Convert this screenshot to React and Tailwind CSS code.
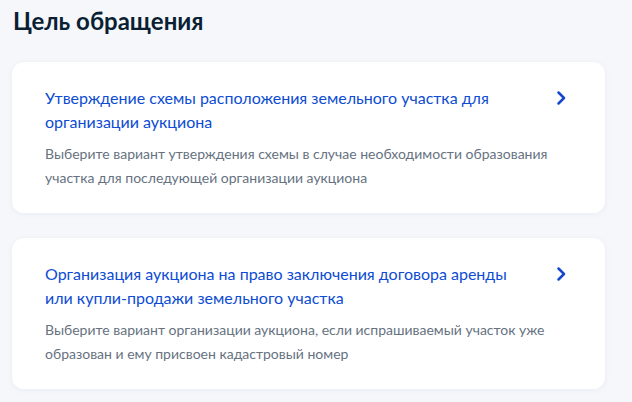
import React from 'react';

const items = [
  {
    title: 'Утверждение схемы расположения земельного участка для организации аукциона',
    text: 'Выберите вариант утверждения схемы в случае необходимости образования участка для последующей организации аукциона',
  },
  {
    title: 'Организация аукциона на право заключения договора аренды или купли-продажи земельного участка',
    text: 'Выберите вариант организации аукциона, если испрашиваемый участок уже образован и ему присвоен кадастровый номер',
  },
];

const Chevron = () => (
  <svg width="16" height="16" viewBox="0 0 16 16" fill="none">
    <path d="M5.5 2.5 L11 8 L5.5 13.5" stroke="#1447cc" strokeWidth="2.5" strokeLinecap="round" strokeLinejoin="round" />
  </svg>
);

const App = () => {
  return (
    <div className="min-h-screen w-[632px] h-[402px] overflow-hidden bg-[#f5f7fb] px-[12px] pt-[6px] font-['Lato','Noto_Sans',sans-serif]">
      <h1 className="pl-[1px] text-[24px] font-bold leading-[30px] text-[#0b1f33]">Цель обращения</h1>

      <div className="mt-[26px] flex w-[593px] flex-col gap-[25px]">
        {items.map((item, i) => (
          <div
            key={i}
            className="flex h-[151px] items-start justify-between rounded-[12px] bg-white pl-[33px] pr-[36px] pt-[24px] shadow-[0_1px_6px_rgba(0,30,80,0.05)]"
          >
            <div className="w-[515px]">
              <div className="w-[470px] text-[16px] leading-[24px] text-[#0d4cd3]">{item.title}</div>
              <div className="mt-[8px] text-[14px] leading-[24px] text-[#66727f]">{item.text}</div>
            </div>
            <div className="pt-[4px]">
              <Chevron />
            </div>
          </div>
        ))}
      </div>
    </div>
  );
};

export default App;
